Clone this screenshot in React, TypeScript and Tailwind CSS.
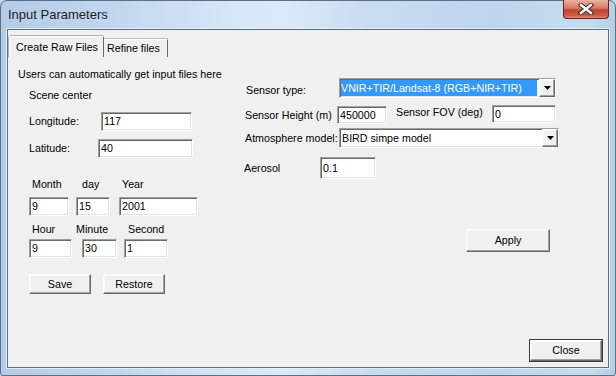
import React from "react";

const sunken =
  "bg-white border border-t-[#a0a0a0] border-l-[#a0a0a0] border-r-[#ffffff] border-b-[#ffffff] shadow-[inset_1px_1px_0_#696969,inset_-1px_-1px_0_#e3e3e3]";
const raised =
  "bg-[#f0f0f0] border border-t-[#ffffff] border-l-[#ffffff] border-r-[#696969] border-b-[#696969] shadow-[inset_-1px_-1px_0_#a0a0a0,inset_1px_1px_0_#f8f8f8]";

function Field({ value, cls }: { value: string; cls: string }) {
  return (
    <div className={`${sunken} ${cls} flex items-center pl-[2px] text-[10.7px] leading-[13px] text-black whitespace-nowrap`}>
      {value}
    </div>
  );
}

function Btn({ label, cls, def }: { label: string; cls: string; def?: boolean }) {
  if (def) {
    return (
      <div className={`border border-[#3c3c3c] ${cls} flex`}>
        <div className={`${raised} flex-1 flex items-center justify-center text-[10.7px] text-black`}>{label}</div>
      </div>
    );
  }
  return <div className={`${raised} ${cls} flex items-center justify-center text-[10.7px] text-black`}>{label}</div>;
}

function Arrow() {
  return (
    <div className={`${raised} w-[16px] h-full flex items-center justify-center`}>
      <svg width="7" height="4" viewBox="0 0 7 4">
        <path d="M0 0H7L3.5 4Z" fill="#000" />
      </svg>
    </div>
  );
}

const lbl = "text-[10.7px] leading-[13px] whitespace-nowrap";

export default function App() {
  return (
    <div className="w-[616px] h-[376px] overflow-hidden bg-[#c2d7ee] font-['Liberation_Sans',Arial,sans-serif]">
      <div className="w-[616px] h-[376px] flex flex-col border border-[#5b6f86] rounded-t-[7px] rounded-b-[3px] bg-[linear-gradient(90deg,#b4cce8_0%,#c3d8ef_20%,#d6e7f8_38%,#dbeaf9_46%,#c8dcf1_60%,#bfd5ee_80%,#c6dcee_96%,#b7cfe6_100%)]">
        {/* title bar */}
        <div className="h-[28px] flex items-start shrink-0">
          <div className="pl-[7px] pt-[6px] text-[13px] leading-[16px] text-[#1e1e1e]">Input Parameters</div>
          <div className="ml-auto mr-[6px] w-[46px] h-[19px] -mt-[1px] rounded-b-[4px] border border-[#5a2a24] border-t-0 bg-[linear-gradient(180deg,#eab2a2_0%,#d77a63_45%,#c2412e_55%,#cd5a44_85%,#e08b70_100%)] flex items-center justify-center">
            <svg width="16" height="12" viewBox="0 0 16 12">
              <path d="M3 2L13 10M13 2L3 10" stroke="#3a2a2a" strokeWidth="4.4" strokeLinecap="square" />
              <path d="M3 2L13 10M13 2L3 10" stroke="#ffffff" strokeWidth="2.4" strokeLinecap="square" />
            </svg>
          </div>
        </div>
        {/* client */}
        <div className="ml-[6px] w-[602px] h-[339px] border border-[#5f6f82] shadow-[0_0_0_1px_#e3eef9] bg-[#f0f0f0] flex flex-col text-black">
          {/* tabs */}
          <div className="flex items-end mt-[6px] ml-[1px] h-[21px] shrink-0">
            <div className={`w-[95px] h-[21px] border-l border-t border-r border-l-[#ffffff] border-t-[#ffffff] border-r-[#696969] shadow-[-1px_0_0_#b0b0b0,0_-1px_0_#b0b0b0] rounded-t-[2px] flex items-start pt-[4px] pl-[6px] ${lbl}`}>
              Create Raw Files
            </div>
            <div className={`w-[64px] h-[18px] border-t border-r border-t-[#ffffff] border-r-[#696969] shadow-[0_-1px_0_#c0c0c0] flex items-start pt-[2px] pl-[3px] ${lbl}`}>
              Refine files
            </div>
          </div>
          {/* content */}
          <div className="flex flex-1">
            {/* left column */}
            <div className="w-[236px] pl-[10px] flex flex-col">
              <div className={`mt-[11px] h-[13px] ${lbl}`}>Users can automatically get input files here</div>
              <div className={`mt-[8px] ml-[11px] h-[13px] ${lbl}`}>Scene center</div>
              <div className="mt-[10px] ml-[11px] flex items-center h-[19px]">
                <div className={`w-[72px] ${lbl}`}>Longitude:</div>
                <Field value="117" cls="w-[91px] h-[19px]" />
              </div>
              <div className="mt-[8px] ml-[11px] flex items-center h-[19px]">
                <div className={`w-[69px] ${lbl}`}>Latitude:</div>
                <Field value="40" cls="w-[95px] h-[19px]" />
              </div>
              <div className={`mt-[20px] ml-[14px] flex h-[13px] ${lbl}`}>
                <div className="w-[50px]">Month</div>
                <div className="w-[40px]">day</div>
                <div>Year</div>
              </div>
              <div className="mt-[6px] ml-[11px] flex h-[19px]">
                <Field value="9" cls="w-[40px] h-[19px]" />
                <Field value="15" cls="w-[34px] h-[19px] ml-[7px]" />
                <Field value="2001" cls="w-[79px] h-[19px] ml-[9px]" />
              </div>
              <div className={`mt-[7px] ml-[14px] flex h-[13px] ${lbl}`}>
                <div className="w-[44px]">Hour</div>
                <div className="w-[52px]">Minute</div>
                <div>Second</div>
              </div>
              <div className="mt-[3px] ml-[11px] flex h-[19px]">
                <Field value="9" cls="w-[43px] h-[19px]" />
                <Field value="30" cls="w-[35px] h-[19px] ml-[10px]" />
                <Field value="1" cls="w-[44px] h-[19px] ml-[7px]" />
              </div>
              <div className="mt-[16px] ml-[11px] flex h-[20px]">
                <Btn label="Save" cls="w-[62px] h-[20px]" />
                <Btn label="Restore" cls="w-[62px] h-[20px] ml-[12px]" />
              </div>
            </div>
            {/* right column */}
            <div className="flex flex-col">
              <div className="mt-[21px] flex items-start h-[20px]">
                <div className={`ml-[2px] w-[93px] pt-[6px] ${lbl}`}>Sensor type:</div>
                <div className={`${sunken} w-[217px] h-[20px] flex items-stretch`}>
                  <div className="flex-1 flex items-center pl-[1px] py-[1px]">
                    <div className={`w-full h-full bg-[#3399ff] text-white flex items-center ${lbl}`}>
                      VNIR+TIR/Landsat-8 (RGB+NIR+TIR)
                    </div>
                  </div>
                  <div className="w-[2px]" />
                  <Arrow />
                </div>
              </div>
              <div className="mt-[7px] flex items-start h-[19px]">
                <div className={`ml-[1px] w-[92px] pt-[4px] ${lbl}`}>Sensor Height (m)</div>
                <Field value="450000" cls="w-[50px] h-[18px] mt-[1px]" />
                <div className={`ml-[9px] w-[96px] pt-[1px] ${lbl}`}>Sensor FOV (deg)</div>
                <Field value="0" cls="w-[64px] h-[18px]" />
              </div>
              <div className="mt-[4px] flex items-start h-[20px]">
                <div className={`ml-[1px] w-[94px] pt-[4px] ${lbl}`}>Atmosphere model:</div>
                <div className={`${sunken} w-[220px] h-[20px] flex items-stretch`}>
                  <div className={`flex-1 flex items-center pl-[2px] ${lbl}`}>BIRD simpe model</div>
                  <Arrow />
                </div>
              </div>
              <div className="mt-[9px] flex items-start h-[22px]">
                <div className={`w-[76px] pt-[5px] ${lbl}`}>Aerosol</div>
                <Field value="0.1" cls="w-[56px] h-[22px]" />
              </div>
              <div className="mt-[50px] ml-[222px]">
                <Btn label="Apply" cls="w-[84px] h-[23px]" />
              </div>
            </div>
          </div>
          <div className="flex justify-end pr-[5px] pb-[5px]">
            <Btn label="Close" cls="w-[74px] h-[23px]" def />
          </div>
        </div>
      </div>
    </div>
  );
}
